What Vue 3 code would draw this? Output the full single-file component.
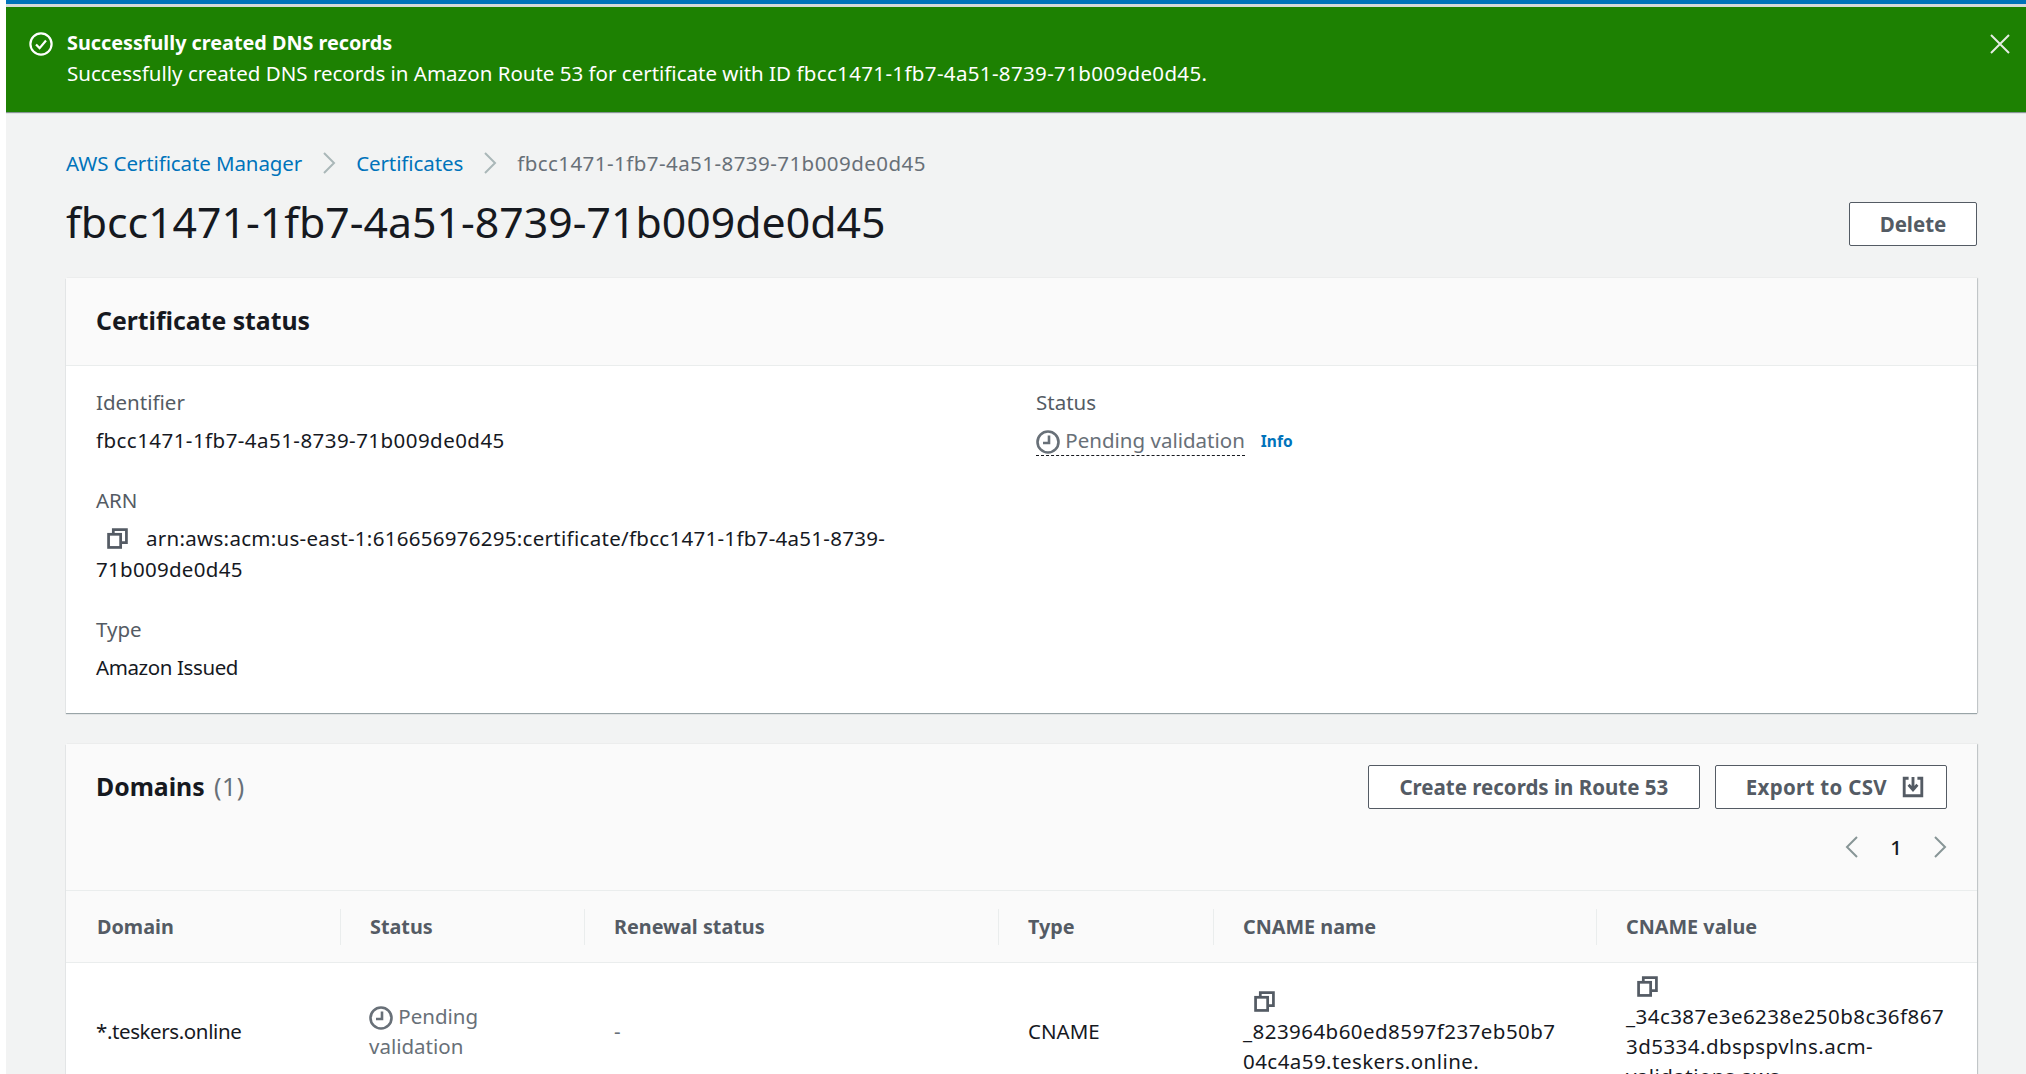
<template>
  <div class="shell">
    <div class="page">
      <div class="top-line"></div>
      <div class="flash">
        <svg class="flash-icon" viewBox="0 0 24 24" fill="none" stroke="#fff" stroke-width="2.2">
          <circle cx="12" cy="12" r="10.6" />
          <path d="M7 12.5l3.6 3.6 6.4-7.6" />
        </svg>
        <div class="flash-text">
          <div class="flash-title">Successfully created DNS records</div>
          <div>Successfully created DNS records in Amazon Route 53 for certificate with ID <span class="flash-id">{{ certId }}</span>.</div>
        </div>
        <svg class="flash-close" viewBox="0 0 20 20" fill="none" stroke="#e6ece4" stroke-width="2">
          <path d="M1 1l18 18M19 1L1 19" />
        </svg>
      </div>

      <div class="content">
        <nav class="crumbs">
          <a>AWS Certificate Manager</a>
          <svg class="crumb-sep" viewBox="0 0 14 22" fill="none" stroke="#aab7b8" stroke-width="2"><path d="M2 1l10 10L2 21" /></svg>
          <a>Certificates</a>
          <svg class="crumb-sep" viewBox="0 0 14 22" fill="none" stroke="#aab7b8" stroke-width="2"><path d="M2 1l10 10L2 21" /></svg>
          <span class="hex">{{ certId }}</span>
        </nav>

        <div class="title-row">
          <h1>{{ certId }}</h1>
          <button class="btn delete">Delete</button>
        </div>

        <section class="card status-card">
          <header class="card-head">
            <h2>Certificate status</h2>
          </header>
          <div class="details">
            <div class="col-left">
              <div class="field">
                <div class="label">Identifier</div>
                <div class="value hex">{{ certId }}</div>
              </div>
              <div class="field">
                <div class="label">ARN</div>
                <div class="value arn">
                  <svg class="copy arn-copy" viewBox="0 0 20 20" fill="none" stroke="#545b64" stroke-width="2.6">
                    <rect x="1.5" y="6" width="11.5" height="12.5" />
                    <path d="M6 6V1.5h12.5V14H13" />
                  </svg>arn:aws:acm:us-east-1:616656976295:certificate/{{ certId }}
                </div>
              </div>
              <div class="field">
                <div class="label">Type</div>
                <div class="value tight">Amazon Issued</div>
              </div>
            </div>
            <div class="col-right">
              <div class="label">Status</div>
              <div class="status-line">
                <span class="pending dotted">
                  <svg class="clock" viewBox="0 0 24 24" fill="none" stroke="#687078" stroke-width="2.6">
                    <circle cx="12" cy="12" r="10.5" />
                    <path d="M13 5.5V13H7" />
                  </svg>
                  Pending validation
                </span>
                <a class="info">Info</a>
              </div>
            </div>
          </div>
        </section>

        <section class="card domains-card">
          <header class="domains-head">
            <div class="domains-top">
              <h2 class="domains-title">Domains <span class="count">(1)</span></h2>
              <div class="actions">
                <button class="btn create">Create records in Route 53</button>
                <button class="btn export">
                  Export to CSV
                  <svg class="export-icon" viewBox="0 0 20 20" fill="none" stroke="#545b64" stroke-width="2.6">
                    <path d="M6 2H2v16h16V2h-4" />
                    <path d="M10 1v11M6 8l4 4.5L14 8" />
                  </svg>
                </button>
              </div>
            </div>
            <div class="pager">
              <svg viewBox="0 0 14 22" fill="none" stroke="#879596" stroke-width="2"><path d="M12 1L2 11l10 10" /></svg>
              <span>1</span>
              <svg viewBox="0 0 14 22" fill="none" stroke="#879596" stroke-width="2"><path d="M2 1l10 10L2 21" /></svg>
            </div>
          </header>

          <div class="table-head">
            <div v-for="col in columns" :key="col" class="th"><span>{{ col }}</span></div>
          </div>
          <div class="table-row">
            <div class="td tight">*.teskers.online</div>
            <div class="td status-td">
              <span class="pending">
                <svg class="clock" viewBox="0 0 24 24" fill="none" stroke="#687078" stroke-width="2.6">
                  <circle cx="12" cy="12" r="10.5" />
                  <path d="M13 5.5V13H7" />
                </svg>
                Pending validation
              </span>
            </div>
            <div class="td muted">-</div>
            <div class="td">CNAME</div>
            <div class="td">
              <div class="copy-line">
                <svg class="copy" viewBox="0 0 20 20" fill="none" stroke="#545b64" stroke-width="2.6">
                  <rect x="1.5" y="6" width="11.5" height="12.5" />
                  <path d="M6 6V1.5h12.5V14H13" />
                </svg>
              </div>
              <div class="hex">_823964b60ed8597f237eb50b704c4a59.teskers.online.</div>
            </div>
            <div class="td">
              <div class="copy-line">
                <svg class="copy" viewBox="0 0 20 20" fill="none" stroke="#545b64" stroke-width="2.6">
                  <rect x="1.5" y="6" width="11.5" height="12.5" />
                  <path d="M6 6V1.5h12.5V14H13" />
                </svg>
              </div>
              <div class="hex">_34c387e3e6238e250b8c36f8673d5334.dbspspvlns.acm-validations.aws.</div>
            </div>
          </div>
        </section>
      </div>
    </div>
  </div>
</template>

<script setup>
const certId = 'fbcc1471-1fb7-4a51-8739-71b009de0d45'
const columns = ['Domain', 'Status', 'Renewal status', 'Type', 'CNAME name', 'CNAME value']
</script>

<style>
html,
body {
  margin: 0;
  height: 1074px;
  overflow: hidden;
  background: #fff;
}
</style>

<style scoped>
.shell {
  height: 1074px;
  overflow: hidden;
  padding-left: 6px;
  background: #fff;
  font-family: "Noto Sans", sans-serif;
  font-size: 20.5px;
  line-height: 30px;
  color: #16191f;
}
.page {
  height: 1074px;
  overflow: hidden;
  background: #f2f3f3;
}
.hex {
  letter-spacing: 0.45px;
}
.tight {
  letter-spacing: -0.4px;
}
.top-line {
  height: 4px;
  background: #0073bb;
  border-bottom: 3px solid #d5dbdb;
}
.flash {
  height: 105px;
  box-sizing: border-box;
  display: flex;
  padding: 21px 16px 0 23px;
  background: #1d8102;
  color: #fff;
  box-shadow: 0 1px 1px #879596;
}
.flash-icon {
  width: 24px;
  height: 24px;
  margin: 4px 14px 0 0;
}
.flash-text {
  flex: 1;
  line-height: 30px;
}
.flash-title {
  font-size: 19.8px;
  font-weight: 700;
}
.flash-id {
  letter-spacing: 0.35px;
}
.flash-close {
  width: 20px;
  height: 20px;
  margin-top: 6px;
}
.content {
  padding: 36px 49px 0 60px;
}
.crumbs {
  display: flex;
  align-items: center;
  gap: 20px;
  height: 30px;
  color: #687078;
}
.crumbs a {
  color: #0073bb;
  letter-spacing: -0.1px;
}
.crumb-sep {
  width: 14px;
  height: 22px;
}
.title-row {
  display: flex;
  justify-content: space-between;
  align-items: center;
  margin-top: 13px;
  height: 60px;
}
h1 {
  margin: 2px 0 0;
  font-size: 42.8px;
  font-weight: 400;
  line-height: 60px;
}
.btn {
  height: 44px;
  box-sizing: border-box;
  border: 1px solid #545b64;
  border-radius: 2px;
  background: #fff;
  color: #545b64;
  font-family: inherit;
  font-size: 20.5px;
  font-weight: 700;
  display: inline-flex;
  align-items: center;
}
.delete {
  width: 128px;
  justify-content: center;
  padding: 0;
  margin-top: 6px;
}
.create {
  padding: 0 30.5px;
}
.card {
  background: #fff;
  box-shadow: 0 1px 1px rgba(0, 28, 36, 0.35), 1px 0 1px rgba(0, 28, 36, 0.15);
}
.status-card {
  margin-top: 27px;
  height: 435px;
}
.card-head {
  height: 88px;
  box-sizing: border-box;
  display: flex;
  align-items: center;
  padding: 0 0 3px 30px;
  background: #fafafa;
  border-bottom: 1px solid #eaeded;
}
h2 {
  margin: 0;
  font-size: 24.8px;
  font-weight: 700;
}
.details {
  display: flex;
  padding: 21px 30px 0;
}
.col-left {
  width: 810px;
  margin-right: 130px;
}
.field {
  margin-bottom: 29px;
}
.field:first-child {
  margin-bottom: 30px;
}
.label {
  color: #545b64;
}
.value {
  margin-top: 8px;
}
.arn {
  line-height: 31px;
  letter-spacing: 0.29px;
}
.arn-copy {
  margin: 0 18px 0 11px;
}
.copy {
  width: 21px;
  height: 21px;
  vertical-align: -3px;
}
.status-line {
  display: flex;
  align-items: center;
  margin-top: 8px;
}
.pending {
  color: #687078;
}
.dotted {
  border-bottom: 1px dashed #16191f;
  line-height: 30px;
}
.clock {
  width: 24px;
  height: 24px;
  vertical-align: -6px;
}
.info {
  margin-left: 16px;
  color: #0073bb;
  font-size: 15.5px;
  font-weight: 700;
}
.domains-card {
  margin-top: 31px;
  background: #fff;
}
.domains-head {
  height: 147px;
  box-sizing: border-box;
  padding: 21px 30px 0;
  background: #fafafa;
  border-bottom: 1px solid #eaeded;
}
.domains-top {
  display: flex;
  justify-content: space-between;
  align-items: center;
  height: 44px;
}
.domains-title {
  margin-top: -3px;
}
.count {
  margin-left: 3px;
  color: #687078;
  font-weight: 400;
  letter-spacing: 0.5px;
}
.actions {
  display: flex;
  gap: 15px;
}
.export {
  padding: 0 22px 0 30px;
  letter-spacing: 0.3px;
}
.export-icon {
  width: 22px;
  height: 22px;
  margin-left: 15px;
}
.pager {
  display: flex;
  justify-content: flex-end;
  align-items: center;
  gap: 31px;
  margin-top: 23px;
  font-weight: 500;
}
.pager svg {
  width: 14px;
  height: 22px;
}
.table-head,
.table-row {
  display: grid;
  grid-template-columns: 274px 244px 414px 215px 383px 381px;
}
.table-head {
  height: 72px;
  box-sizing: border-box;
  align-items: center;
  background: #fafafa;
  border-bottom: 1px solid #eaeded;
}
.th {
  height: 36px;
  display: flex;
  align-items: center;
  padding-left: 29px;
  color: #545b64;
  font-size: 19.8px;
  font-weight: 700;
  border-left: 1px solid #eaeded;
}
.th:first-child {
  padding-left: 31px;
  border-left: 0;
}
.table-row {
  align-items: center;
  padding: 8px 0;
}
.td {
  padding: 0 30px;
  overflow-wrap: anywhere;
}
.status-td {
  padding-left: 29px;
}
.copy-line {
  padding-left: 11px;
  height: 30px;
}
.muted {
  color: #687078;
}
</style>
